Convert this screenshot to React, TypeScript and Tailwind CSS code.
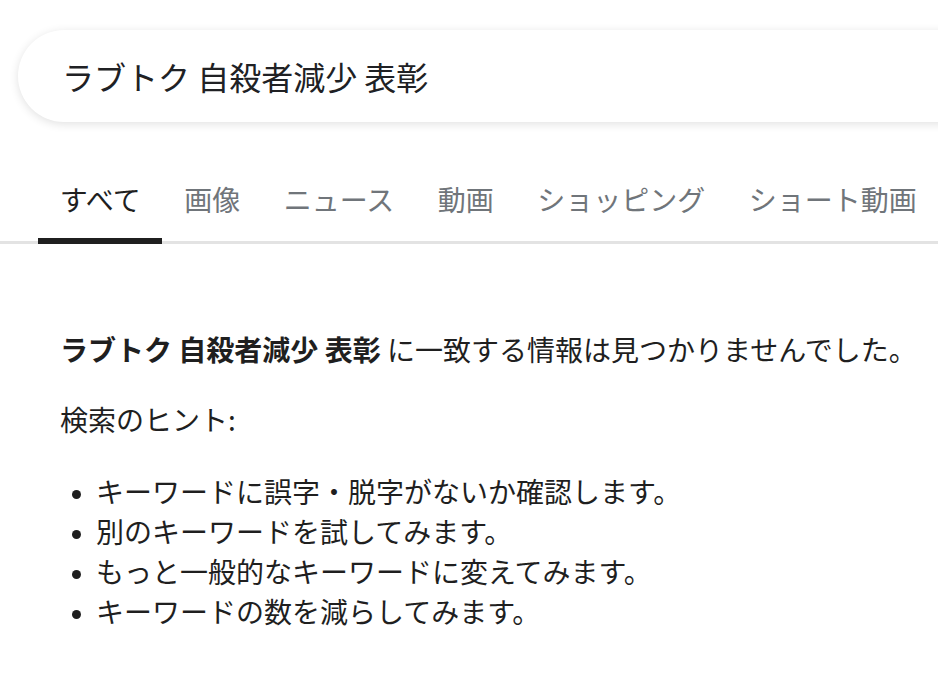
const tabs = ["すべて", "画像", "ニュース", "動画", "ショッピング", "ショート動画"];

const hints = [
  "キーワードに誤字・脱字がないか確認します。",
  "別のキーワードを試してみます。",
  "もっと一般的なキーワードに変えてみます。",
  "キーワードの数を減らしてみます。",
];

const App = () => {
  return (
    <div
      className="w-[938px] h-[676px] overflow-hidden bg-white text-[#1f1f1f]"
      style={{ fontFamily: '"Noto Sans CJK JP", "Noto Sans", sans-serif' }}
    >
      <div className="pt-[30px] pl-[18px]">
        <div className="h-[92px] w-[1000px] rounded-full bg-white shadow-[0_2px_10px_rgba(0,0,0,0.12)] flex items-center pl-[44px]">
          <span className="text-[32px] text-[#202124]">ラブトク 自殺者減少 表彰</span>
        </div>
      </div>

      <nav className="mt-[58px] flex border-b-[3px] border-[#e3e3e3] pl-[38px] whitespace-nowrap">
        {tabs.map((tab, i) => (
          <div
            key={tab}
            className={
              i === 0
                ? "px-[21.75px] pb-[20px] text-[28px] leading-[38px] text-[#1f1f1f] border-b-[6px] border-[#1f1f1f] -mb-[3px]"
                : "px-[21.75px] pb-[20px] text-[28px] leading-[38px] text-[#70757a] border-b-[6px] border-transparent -mb-[3px]"
            }
          >
            {tab}
          </div>
        ))}
      </nav>

      <main className="pl-[60px] pt-[87px] text-[28px] whitespace-nowrap">
        <p className="leading-[36px]">
          <span className="font-bold">ラブトク 自殺者減少 表彰</span> に一致する情報は見つかりませんでした。
        </p>
        <p className="mt-[34px] leading-[36px]">検索のヒント:</p>
        <ul className="mt-[34px] list-disc pl-[36px] marker:text-[22px]">
          {hints.map((h) => (
            <li key={h} className="leading-[40px]">
              {h}
            </li>
          ))}
        </ul>
      </main>
    </div>
  );
};

export default App;
